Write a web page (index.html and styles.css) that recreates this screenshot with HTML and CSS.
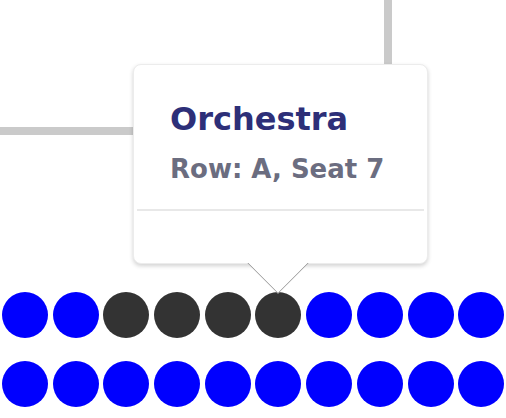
FILE: index.html
```html
<!DOCTYPE html>
<html lang="en">
<head>
    <meta charset="UTF-8">
    <title>Seat map</title>
    <link rel="stylesheet" href="styles.css">
</head>
<body>
    <div class="stage"></div>

    <div class="seats">
        <div class="seat-row">
            <span class="seat"></span>
            <span class="seat"></span>
            <span class="seat taken"></span>
            <span class="seat taken"></span>
            <span class="seat taken"></span>
            <span class="seat taken"></span>
            <span class="seat"></span>
            <span class="seat"></span>
            <span class="seat"></span>
            <span class="seat"></span>
        </div>
        <div class="seat-row">
            <span class="seat"></span>
            <span class="seat"></span>
            <span class="seat"></span>
            <span class="seat"></span>
            <span class="seat"></span>
            <span class="seat"></span>
            <span class="seat"></span>
            <span class="seat"></span>
            <span class="seat"></span>
            <span class="seat"></span>
        </div>
    </div>

    <div class="tooltip">
        <div class="tooltip-body">
            <div class="tooltip-title">Orchestra</div>
            <div class="tooltip-sub">Row: A, Seat 7</div>
        </div>
        <div class="tooltip-footer"></div>
        <div class="tooltip-arrow"></div>
    </div>
</body>
</html>
```

FILE: styles.css
```css
body {
    margin: 0;
    background-color: white;
    font-family: "DejaVu Sans", "Open Sans", sans-serif;
    position: relative;
    height: 418px;
    overflow: hidden;
}
.stage {
    width: 384px;
    height: 127px;
    border-right: 8px solid #cacaca;
    border-bottom: 8px solid #cacaca;
}
.seats {
    margin-top: 157px;
    padding-left: 2px;
    display: flex;
    flex-direction: column;
    gap: 23px;
}
.seat-row {
    display: flex;
    gap: 4.7px;
}
.seat {
    width: 46px;
    height: 46px;
    flex-shrink: 0;
    border-radius: 50%;
    background-color: #0000ff;
}
.seat.taken {
    background-color: #333333;
}
.tooltip {
    position: absolute;
    left: 133px;
    top: 64px;
    width: 295px;
    height: 200px;
    background-color: white;
    border: 1px solid #ececec;
    border-radius: 8px;
    box-shadow: 0 2px 4px rgba(0, 0, 0, 0.18);
    box-sizing: border-box;
}
.tooltip-body {
    padding: 36px 0 0 33px;
    height: 146px;
    box-sizing: border-box;
    border-bottom: 2px solid #e8e8e8;
    margin: 0 3px;
}
.tooltip-title {
    color: #2d2f78;
    font-size: 32px;
    font-weight: bold;
    line-height: 36px;
}
.tooltip-sub {
    color: #6b6d80;
    font-size: 26px;
    font-weight: bold;
    line-height: 36px;
    margin-top: 14px;
}
.tooltip-arrow {
    position: absolute;
    left: 122px;
    bottom: -22px;
    width: 44px;
    height: 44px;
    background-color: white;
    transform: rotate(45deg);
    border-right: 1.5px solid #8e8e8e;
    border-bottom: 1.5px solid #8e8e8e;
    box-sizing: border-box;
    clip-path: polygon(100% 0, 100% 100%, 0 100%);
}
```
